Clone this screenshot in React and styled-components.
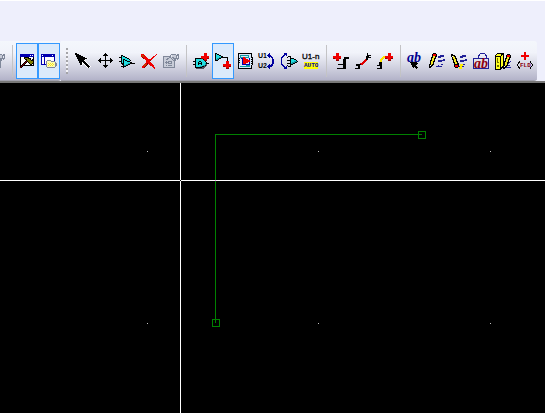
import React, { useState } from 'react';
import styled, { createGlobalStyle } from 'styled-components';

const GlobalStyle = createGlobalStyle`
  body {
    margin: 0;
    background-color: #000;
    font-family: "Liberation Sans", sans-serif;
  }
`;

const Page = styled.div`
  display: flex;
  flex-direction: column;
  height: 100vh;
  overflow: hidden;
`;

const Header = styled.header`
  padding-top: 40px;
  border-top: 1px solid #fff;
  border-bottom: 2px solid #787878;
  background-color: #eeeffc;
`;

const Bars = styled.div`
  display: flex;
`;

const Toolbar = styled.div`
  display: flex;
  flex-shrink: 0;
  align-items: center;
  height: 40px;
  box-sizing: border-box;
  padding: 0 1px 0 ${(props) => (props.$clipped ? '0' : '5px')};
  margin-left: ${(props) => (props.$clipped ? '-14px' : '0')};
  border-bottom: 1px solid #a2a2ae;
  border-radius: 0 3px 3px 0;
  background: linear-gradient(#f4f7fc 0%, #f1f3fa 30%, #d6d7e4 62%, #b3b3c9 100%);
`;

const Grip = styled.div`
  width: 2px;
  height: 26px;
  margin-right: 4px;
  background: repeating-linear-gradient(#a4a4a8 0 2px, #f4f4f8 2px 4px);
`;

const Separator = styled.div`
  width: 1px;
  height: 32px;
  margin: 0 3px 0 4px;
  background-color: #c3c3c5;
`;

const ToolButton = styled.button`
  display: flex;
  align-items: center;
  justify-content: center;
  width: 22px;
  height: 36px;
  padding: 0;
  border: 1px solid ${(props) => (props.$active ? '#3399ff' : 'transparent')};
  background-color: ${(props) => (props.$active ? '#dbeafb' : 'transparent')};
`;

const Glyph = styled.svg`
  flex-shrink: 0;
  width: 18px;
  height: 18px;
  overflow: visible;
  shape-rendering: crispEdges;
`;

const Label = styled.text`
  font-family: ${(props) => props.$family || '"Liberation Sans", sans-serif'};
  font-size: ${(props) => props.$size}px;
  font-weight: ${(props) => (props.$bold ? 'bold' : 'normal')};
  font-style: ${(props) => (props.$italic ? 'italic' : 'normal')};
`;

const Sheet = styled.main`
  flex: 1;
  min-height: 0;
  background-color: #000;
`;

const Drawing = styled.svg`
  display: block;
  width: 100%;
  height: 100%;
  shape-rendering: crispEdges;
`;

const MONO = '"Liberation Mono", monospace';
const SERIF = '"Liberation Serif", serif';

const COLORS = {
  k: '#000',
  w: '#fff',
  b: '#d8e8f8',
  r: '#f00000',
  R: '#8a0000',
  c: '#22dde0',
  t: '#109ca4',
  n: '#0000b0',
  y: '#f4e820',
  Y: '#fffbb0',
  o: '#808000',
  g: '#80889a',
  s: '#c8ccd8',
  d: '#50505c',
};

// one character per pixel, a dot is empty
const Pixels = ({ rows, x = 0, y = 0 }) => (
  <g>
    {rows.map((row, j) =>
      row.split('').map((ch, i) =>
        COLORS[ch] ? (
          <rect key={`${i}-${j}`} x={x + i} y={y + j} width="1" height="1" fill={COLORS[ch]} />
        ) : null
      )
    )}
  </g>
);

const PLUS = [
  '...rrr..',
  '...rrr..',
  '...rrr..',
  'rrrrrrrr',
  'rrrrrrrr',
  'RRrrrrRR',
  '...rrr..',
  '...RRR..',
];

const HAMMER = [
  'nnnnnnnnnnnnnn',
  'nnnnnnnnnnwnwn',
  'nnnnnnnnnnnnnn',
  'kwwwkkkkkwwwwk',
  'kwwwkoookkkwwk',
  'kwwwwkkoookwkk',
  'kwwwwwkooookkk',
  'kwwwwkRkoooook',
  'kwwwkRkwkooook',
  'kwwkRkwwwkookk',
  'kwkRkwwwwwkkwk',
  'kkRkkkkkkkkkkk',
  'kRk...........',
  'Rk............',
];

const FOLDER = [
  'nnnnnnnnnnnnnn..',
  'nwnnnnnnnnnwnn..',
  'nnnnnnnnnnnnnn..',
  'nwwnwwwwwwwwwn..',
  'nwwnwwwwwwwwwn..',
  'nwwnwwwwwwwwwn..',
  'nwwnwwggggwwwn..',
  'nwwnwgYYYYgggg..',
  'nwwnwgYYYYYYYYg.',
  'nwwnwgYyYyYyYYgg',
  'nnnnngYYyYyYyYgg',
  '.....gYyYyYyYYgg',
  '.....gYYYYYYYYg.',
  '......gggggggg..',
];

const ARROW = [
  'kk..............',
  'kkkk............',
  '.kkkkk..........',
  '.kkkkkkk........',
  '..kkkkkkkkw.....',
  '..kkkkkkkkkkw...',
  '...kkkkkkkw.....',
  '...kkkkkkw......',
  '....kkkkkkw.....',
  '....kkkwkkkw....',
  '.....kkwwkkkw...',
  '.....kkw.wkkkw..',
  '......w...wkkkw.',
  '...........wkkkw',
  '............wkw.',
];

const MOVE = [
  '.......k.......',
  '......kkk......',
  '.....kkkkk.....',
  '.......k.......',
  '.......k.......',
  '..k....k....k..',
  '.kk....k....kk.',
  'kkkkkkkkkkkkkkk',
  '.kk....k....kk.',
  '..k....k....k..',
  '.......k.......',
  '.......k.......',
  '.....kkkkk.....',
  '......kkk......',
  '.......k.......',
];

const GATES = [
  '..kk............',
  '..kckk..........',
  'kkkccckk........',
  '..kccccckk......',
  '..kckkcccck.....',
  '..kckckkccck....',
  'kkkckccckkk.....',
  '..kckcccccckk...',
  '..kkkccccttkkkkk',
  '...kkccttkk.....',
  '....kttkk.......',
  '..kkkkk.........',
  '....k...........',
];

const CROSS = [
  'rrr............r',
  'rorr..........r.',
  'rrorr.......rr..',
  '.Rrrrr.....rr...',
  '..Rrrrr...rr....',
  '....rrrrrrr.....',
  '.....rrrrR......',
  '.....rrrr.......',
  '.....rrrrr......',
  '....rrRrrrr.....',
  '...rorR.rrrr....',
  '..rorR...rrrr...',
  '.rrrR......rr...',
  '.rrR........rr..',
  '.............r..',
];

const PROPS = [
  '........ggggg.gg',
  '.......g.ssssggg',
  'gggggggg.ssssg.g',
  'gsssssggsggssg.g',
  'gsssggssgsgggggg',
  'gssggssssgsgg.g.',
  'gsssssssssggg...',
  'gssgsggggssg....',
  'gsggggssgssg....',
  'gssgsggggssg....',
  'gssssssssssg....',
  'gssgsggggssg....',
  'gssssssssssg....',
  'gggggggggggg....',
];

const COMPONENT = [
  '..kkkkkkkk......',
  '..kccccccckk....',
  '..kccccccccck...',
  'kkkccckkcccck...',
  '..kcckcckcccck..',
  '..kcckkkkccctkkk',
  'kkkcckcckccctd..',
  '..kcccccccttkd..',
  '..kccccttkkdd...',
  '..kkkkkkkddd....',
  '...dddddddd.....',
];

const WIRE_GATE = [
  'kk......',
  'kckk....',
  'kccckk..',
  'kccccckk',
  'kcccttkk',
  'kcttkk..',
  'kttk....',
  'kkk.....',
];

const PAGE = [
  'kkkkkkkkkkkkkk..',
  'kbbbbbbbbbbbbk..',
  'kbtttttttttbbk..',
  'kbtbbbbbbbtbbk..',
  'kbtttrrttttbbkk.',
  'kkbnnrrrbbbnbbk.',
  'kbbbnrrrrrbnbkk.',
  'kkbbnrrrrrrrbbk.',
  'kbbbnrrrrrrrbkk.',
  'kkbbnrrrrrbnbbk.',
  'kbbbnrrrbbbnbkk.',
  'kbbbnnnnnnnnbbk.',
  'kbbbbbbbttttbk..',
  'kbttttttttttbk..',
  'kbbbbbbbbbbbbk..',
  'kkkkkkkkkkkkkk..',
];

const ROTATE_GATE = [
  '.kkk......',
  'k..k......',
  '...kkkk...',
  '...kccckk.',
  'kkkkccccck',
  '...kccctttk',
  '...kctttkk',
  'kkkkttkk..',
  '...kkk....',
  'k..k......',
  '.kkk......',
];

const PENCIL = [
  '....kkk.',
  '...krrrk',
  '...krrrk',
  '...kyykk',
  '..kkyyk.',
  '..kyykk.',
  '..kyyk..',
  '.kkyyk..',
  '.kyykk..',
  '.kyyk...',
  '.kyyk...',
  'kkykk...',
  'kwkk....',
  'kkk.....',
  'kk......',
];

const PENCIL_DOWN = [
  'kk......',
  'kkkk....',
  'kwykk...',
  '.kyyk...',
  '.kyykk..',
  '.kkyyk..',
  '..kyyk..',
  '..kyykk.',
  '..kkyyk.',
  '...kyykk',
  '...kkkkk',
  '...krrrk',
  '...krrrk',
  '....kkk.',
];

const SMALL_ARROW = [
  'kkkkkkk.',
  '.kkkkkkk',
  '.kkkkkk.',
  '..kkkk..',
  '..kkkkk.',
  '...k.kkk',
  '......k.',
];

const Scribble = () => (
  <path
    d="M12 3H16V5H13V6H10V4H12ZM15 7H17V9H14V10H10V8H15ZM13 12H15V13H11V14H14V15H8V14H10V13H13Z"
    fill="#202098"
  />
);

const ICONS = {
  hammer: <Pixels rows={HAMMER} x={2} y={2} />,
  folder: <Pixels rows={FOLDER} x={1} y={2} />,
  select: <Pixels rows={ARROW} x={1} y={1} />,
  move: <Pixels rows={MOVE} x={2} y={1} />,
  gates: <Pixels rows={GATES} x={1} y={3} />,
  remove: <Pixels rows={CROSS} x={1} y={2} />,
  properties: <Pixels rows={PROPS} x={1} y={2} />,
  component: (
    <>
      <Pixels rows={COMPONENT} x={1} y={6} />
      <Pixels rows={PLUS} x={9} y={1} />
    </>
  ),
  wire: (
    <>
      <Pixels rows={WIRE_GATE} x={1} y={1} />
      <path d="M9 5.5H13.5V9" fill="none" stroke="#000" />
      <Pixels rows={PLUS} x={9} y={9} />
    </>
  ),
  page: <Pixels rows={PAGE} x={2} y={1} />,
  swap: (
    <>
      <Label $size={7} $bold x="0" y="6">U1</Label>
      <Label $size={7} $bold x="0" y="16">U2</Label>
      <path d="M11 3H13V4H14V5H15V7H16V12H15V14H14V15H11V13H13V12H14V6H13V5H11Z" fill="#0000a0" />
      <path d="M12 0V7L9 4ZM12 11V18L9 14Z" fill="#0000a0" />
    </>
  ),
  rotate: (
    <>
      <Pixels rows={ROTATE_GATE} x={7} y={4} />
      <path d="M5 2.5L1.5 6V12L5 15.5" fill="none" stroke="#0000a0" />
      <path d="M3 1H7V5ZM3 17H7V13Z" fill="#0000a0" />
    </>
  ),
  annotate: (
    <>
      <Label $size={8} x="0" y="7" stroke="#000" strokeWidth="0.3">U1-n</Label>
      <rect x="2" y="10" width="14" height="7" fill="#ffff00" />
      <Label $size={6} $family={MONO} $bold x="2" y="15" fill="#0000a0">AUTO</Label>
    </>
  ),
  busPlus: (
    <>
      <Pixels rows={PLUS} x={1} y={1} />
      <path d="M6 12H11V13H6ZM5 16H11V17H5Z" fill="#000" />
      <path d="M12 5H17V7H14V17H10V16H11V7H12Z" fill="#000" />
    </>
  ),
  bus: (
    <>
      <path d="M6 12L8 12L13 7" fill="none" stroke="#e00000" strokeWidth="2" />
      <path d="M13 1H14V3H17V4H15V5H17V6H14V8H12V4H13ZM2 12H7V13H6V17H1V16H4V14H2Z" fill="#000" />
    </>
  ),
  busEnd: (
    <>
      <path d="M5 11V8L8 5H10" fill="none" stroke="#ffe800" strokeWidth="2" />
      <Pixels rows={PLUS} x={9} y={1} />
      <path d="M3 10H6V17H1V16H4V14H1V13H3Z" fill="#000" />
    </>
  ),
  findText: (
    <>
      <Pixels rows={SMALL_ARROW} x={4} y={10} />
      <Label $size={14} $family={SERIF} $bold $italic x="1" y="10" fill="#000090">ab</Label>
    </>
  ),
  pencil: (
    <>
      <Scribble />
      <Pixels rows={PENCIL} x={1} y={1} />
    </>
  ),
  pencilDown: (
    <>
      <Scribble />
      <path d="M9 16H11V13H13" fill="none" stroke="#ffee00" strokeWidth="2" />
      <Pixels rows={PENCIL_DOWN} x={1} y={2} />
    </>
  ),
  textBox: (
    <>
      <path d="M1.5 6.5H16.5V16.5H1.5ZM6.5 6V4L8.5 1.5H12.5L14.5 4V6" fill="none" stroke="#202098" />
      <Label $size={14} $family={SERIF} $bold $italic x="2" y="16" fill="#900010">ab</Label>
    </>
  ),
  library: (
    <>
      <path d="M1 4L4 1H9V14L7 17H1Z" fill="#ffff20" stroke="#000" />
      <path d="M6.5 4V17M1 4H7L9 1" fill="none" stroke="#000" />
      <path d="M3 6H4V10H5V11H3ZM3 13H5V15H3Z" fill="#707000" />
      <path d="M17 9L13 13H16M17 15H12" fill="none" stroke="#202098" />
      <Pixels rows={PENCIL} x={9} y={2} />
    </>
  ),
  field: (
    <>
      <path d="M5 3H8V0H10V3H13V5H10V8H8V5H5Z" fill="#f00000" />
      <path d="M4 9.5L1 13L4 16.5M14 9.5L17 13L14 16.5" fill="none" stroke="#000" />
      <Label $size={6} $family={MONO} $bold x="4" y="15" fill="#8a0010">FLD</Label>
    </>
  ),
};

const PANELS = [
  { icon: 'hammer', name: 'Project manager' },
  { icon: 'folder', name: 'Session log' },
];

const GROUPS = [
  [
    { icon: 'select', name: 'Select' },
    { icon: 'move', name: 'Move' },
    { icon: 'gates', name: 'Copy' },
    { icon: 'remove', name: 'Delete' },
    { icon: 'properties', name: 'Properties' },
  ],
  [
    { icon: 'component', name: 'Place component' },
    { icon: 'wire', name: 'Place wire' },
    { icon: 'page', name: 'Place block' },
    { icon: 'swap', name: 'Swap references' },
    { icon: 'rotate', name: 'Swap gates' },
    { icon: 'annotate', name: 'Auto annotate' },
  ],
  [
    { icon: 'busPlus', name: 'Add bus' },
    { icon: 'bus', name: 'Bus entry' },
    { icon: 'busEnd', name: 'Extend bus' },
  ],
  [
    { icon: 'findText', name: 'Select text' },
    { icon: 'pencil', name: 'Draw' },
    { icon: 'pencilDown', name: 'Erase' },
    { icon: 'textBox', name: 'Text box' },
    { icon: 'library', name: 'Edit library' },
    { icon: 'field', name: 'Add field' },
  ],
];

const DOTS = [
  [147, 68], [318, 68], [490, 68],
  [147, 240], [318, 240], [490, 240],
];

const Tool = ({ icon, name, active, onClick }) => (
  <ToolButton type="button" aria-label={name} aria-pressed={active} $active={active} onClick={onClick}>
    <Glyph viewBox="0 0 18 18" aria-hidden="true">{ICONS[icon]}</Glyph>
  </ToolButton>
);

const Schematic = () => (
  <Drawing>
    {DOTS.map(([x, y]) => (
      <rect key={`${x}-${y}`} x={x} y={y} width="1" height="1" fill="#c0c0c0" />
    ))}
    <rect x="180" y="0" width="1" height="100%" fill="#fff" />
    <rect x="0" y="97" width="100%" height="1" fill="#fff" />
    <rect x="180" y="97" width="1" height="1" fill="#000" />
    <path d="M422 51.5H215.5V240" fill="none" stroke="#008000" />
    <rect x="418.5" y="48.5" width="7" height="7" fill="none" stroke="#008000" />
    <rect x="212.5" y="236.5" width="7" height="7" fill="none" stroke="#008000" />
    <rect x="215" y="97" width="1" height="1" fill="#ff7fff" />
  </Drawing>
);

const App = () => {
  const [tool, setTool] = useState('wire');
  const [open, setOpen] = useState({ hammer: true, folder: true });

  return (
    <Page>
      <GlobalStyle />
      <Header>
        <Bars>
          <Toolbar $clipped role="toolbar">
            <Tool icon="properties" name="Options" />
            <Separator />
            {PANELS.map((item) => (
              <Tool
                key={item.icon}
                {...item}
                active={open[item.icon]}
                onClick={() => setOpen({ ...open, [item.icon]: !open[item.icon] })}
              />
            ))}
          </Toolbar>
          <Toolbar role="toolbar">
            <Grip />
            {GROUPS.map((group, i) => (
              <React.Fragment key={i}>
                {i > 0 && <Separator />}
                {group.map((item) => (
                  <Tool
                    key={item.icon}
                    {...item}
                    active={tool === item.icon}
                    onClick={() => setTool(item.icon)}
                  />
                ))}
              </React.Fragment>
            ))}
          </Toolbar>
        </Bars>
      </Header>
      <Sheet>
        <Schematic />
      </Sheet>
    </Page>
  );
};

export default App;
